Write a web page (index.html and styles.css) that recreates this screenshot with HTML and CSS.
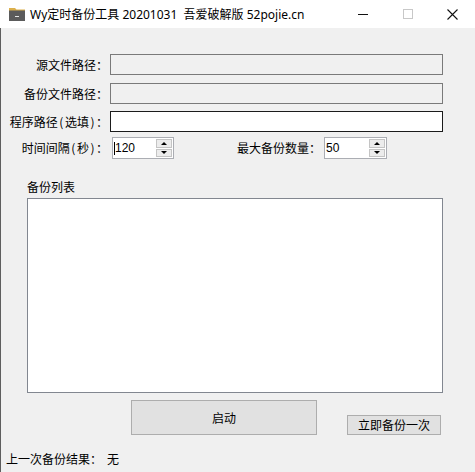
FILE: index.html
```html
<!DOCTYPE html>
<html lang="zh-CN">
<head>
  <meta charset="UTF-8" />
  <title>Wy定时备份工具</title>
  <link rel="stylesheet" href="styles.css">
</head>
<body>
  <div class="window">
    <div class="titlebar">
      <svg class="app-icon" width="16" height="14" viewBox="0 0 16 14">
        <path d="M0 1h6l1.5 1.5H16V4H0z" fill="#dcb04c"/>
        <rect x="0" y="3.5" width="16" height="10.5" fill="#5b5b5b"/>
        <rect x="6" y="9" width="4" height="1" fill="#e8e8e8"/>
      </svg>
      <span class="title">Wy定时备份工具 20201031&nbsp;&nbsp;吾爱破解版 52pojie.cn</span>
      <div class="caption-btns">
        <div class="cap-btn">
          <svg width="10" height="10" viewBox="0 0 10 10"><path d="M0 5.5h10" stroke="#111" stroke-width="1"/></svg>
        </div>
        <div class="cap-btn">
          <svg width="10" height="10" viewBox="0 0 10 10"><rect x="0.5" y="0.5" width="9" height="9" fill="none" stroke="#c8c8c8"/></svg>
        </div>
        <div class="cap-btn">
          <svg width="11" height="11" viewBox="0 0 11 11"><path d="M0.5 0.5l10 10M10.5 0.5l-10 10" stroke="#111" stroke-width="1.1"/></svg>
        </div>
      </div>
    </div>

    <div class="client">
      <div class="field row-1">
        <label class="lbl">源文件路径：</label>
        <div class="textbox readonly"></div>
      </div>
      <div class="field row-2">
        <label class="lbl">备份文件路径：</label>
        <div class="textbox readonly"></div>
      </div>
      <div class="field row-3">
        <label class="lbl">程序路径<span class="paren">(</span>选填<span class="paren">)</span>：</label>
        <div class="textbox focused"></div>
      </div>

      <div class="spin-row">
        <label class="lbl">时间间隔<span class="paren">(</span>秒<span class="paren">)</span>：</label>
        <div class="spin">
          <span class="spin-value"><i class="caret"></i>120</span>
          <div class="spin-btns">
            <div class="spin-up"></div>
            <div class="spin-down"></div>
          </div>
        </div>
        <label class="lbl-max">最大备份数量：</label>
        <div class="spin spin-max">
          <span class="spin-value">50</span>
          <div class="spin-btns">
            <div class="spin-up"></div>
            <div class="spin-down"></div>
          </div>
        </div>
      </div>

      <div class="list-group">
        <div class="list-caption">备份列表</div>
        <div class="listbox"></div>
      </div>

      <div class="actions">
        <button class="btn btn-start">启动</button>
        <button class="btn btn-now">立即备份一次</button>
      </div>

      <div class="status">上一次备份结果：<span class="status-value">无</span></div>
    </div>
  </div>
</body>
</html>
```

FILE: styles.css
```css
* { margin:0; padding:0; box-sizing:border-box; }
body {
  font-family:"Noto Sans CJK SC", "Noto Sans", sans-serif;
  font-size:12px; color:#000; background:#f0f0f0;
}

.window { width:475px; height:472px; display:flex; flex-direction:column; overflow:hidden; }

/* title bar */
.titlebar {
  height:28px; background:#fff; display:flex; align-items:center;
  flex-shrink:0;
}
.app-icon { margin-left:9px; margin-top:-1px; }
.title {
  margin-left:5px; font-family:"Noto Sans", "Noto Sans CJK SC", sans-serif;
  font-size:12px; line-height:16px; color:#000; white-space:nowrap; margin-top:1px;
}
.caption-btns { margin-left:auto; display:flex; height:100%; }
.cap-btn { width:45px; height:100%; display:flex; align-items:center; justify-content:center; }

/* client area */
.client {
  flex:1; background:#f0f0f0; border-left:1px solid #5e5e5e;
  padding-top:26px;
}

.field { display:flex; align-items:center; height:21px; }
.row-1 { margin-bottom:8px; }
.row-2 { margin-bottom:7px; }
.row-3 { height:21px; margin-bottom:5px; }

.lbl { width:108px; text-align:right; white-space:nowrap; line-height:16px; flex-shrink:0; margin-left:-1px; }
.paren { padding:0 1.5px; }
.textbox { width:333px; height:21px; margin-left:2px; border:1px solid #7a7a7a; }
.readonly { background:#f0f0f0; }
.focused { background:#fff; border-color:#1b1b1b; }

/* numeric up-down boxes */
.spin-row { display:flex; align-items:center; height:22px; }
.spin {
  width:62px; height:22px; margin-left:4px;
  border:1px solid #abadb3; background:#fff;
  display:flex; align-items:center;
}
.spin-value {
  flex:1; padding-left:1px; font-family:"Liberation Sans", Arial, sans-serif;
  font-size:12px; line-height:14px; display:flex; align-items:center;
}
.caret { display:inline-block; width:1px; height:13px; background:#000; }
.spin-btns {
  width:16px; height:18px; margin-right:1px;
  display:flex; flex-direction:column; gap:1px;
}
.spin-up, .spin-down {
  flex:1; background:#ececec; border:1px solid #c4c4c4;
  display:flex; align-items:center; justify-content:center;
}
.spin-up::after {
  content:""; border-left:3px solid transparent; border-right:3px solid transparent;
  border-bottom:3px solid #000;
}
.spin-down::after {
  content:""; border-left:3px solid transparent; border-right:3px solid transparent;
  border-top:3px solid #000;
}
.lbl-max { margin-left:63px; white-space:nowrap; line-height:16px; width:87px; }
.spin-max { margin-left:0; width:63px; }

/* backup list */
.list-group { margin-top:20px; padding-left:26px; }
.list-caption { line-height:16px; margin-bottom:3px; }
.listbox { width:416px; height:195px; background:#fff; border:1px solid #828790; }

/* buttons */
.actions { display:flex; align-items:flex-end; margin-top:7px; padding-left:130px; }
.btn {
  font-family:"Noto Sans CJK SC", "Noto Sans", sans-serif; font-size:12px; color:#000;
  background:#e1e1e1; border:1px solid #adadad; cursor:pointer;
}
.btn-start { width:186px; height:35px; }
.btn-now { width:94px; height:20px; margin-left:30px; line-height:16px; }

.status { margin-top:16px; padding-left:5px; line-height:16px; white-space:nowrap; }
.status-value { margin-left:5px; }
```
